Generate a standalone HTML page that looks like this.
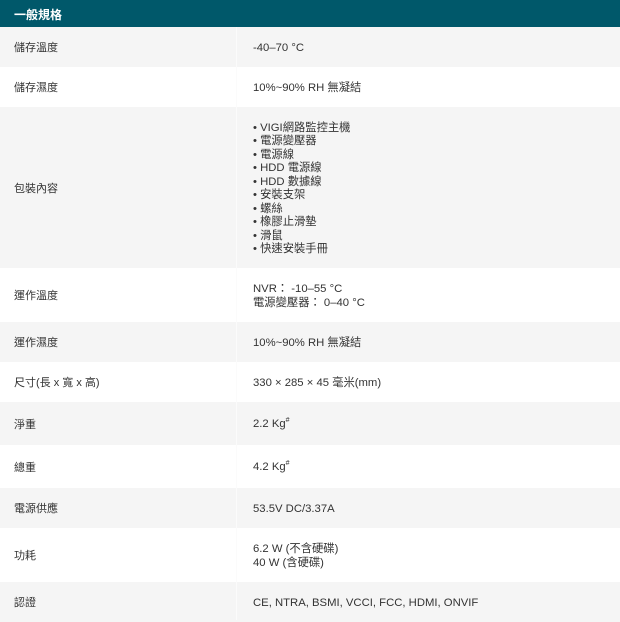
<!DOCTYPE html>
<html><head><meta charset="utf-8"><style>
*{margin:0;padding:0;box-sizing:border-box}
body{width:620px;height:620px;overflow:hidden;background:#fff;font-family:"Liberation Sans","Noto Sans CJK TC",sans-serif;font-size:11px;color:#333}
.h{position:absolute;left:0;top:0;width:620px;height:27px;background:#00586a;color:#fff;font-weight:bold;font-size:12px;padding:6px 0 0 14px}
.r{position:absolute;left:0;width:620px;display:flex;align-items:center}
.g{background:#f5f5f5}
.l{position:absolute;left:14px}
.v{position:absolute;left:253px;line-height:13.5px;padding-top:3px;font-size:11.3px}
.line{position:absolute;left:236px;top:27px;width:1px;height:593px;background:#fbfbfb}
sup{font-size:7px;vertical-align:5px;line-height:0}
</style></head><body>
<div class="h">一般規格</div>
<div class="r g" style="top:27px;height:40px"><span class="l">儲存溫度</span><span class="v">-40–70 °C</span></div>
<div class="r" style="top:67px;height:40px"><span class="l">儲存濕度</span><span class="v">10%~90% RH 無凝結</span></div>
<div class="r g" style="top:107px;height:161px"><span class="l">包裝內容</span><span class="v">• VIGI網路監控主機<br>• 電源變壓器<br>• 電源線<br>• HDD 電源線<br>• HDD 數據線<br>• 安裝支架<br>• 螺絲<br>• 橡膠止滑墊<br>• 滑鼠<br>• 快速安裝手冊</span></div>
<div class="r" style="top:268px;height:54px"><span class="l">運作溫度</span><span class="v">NVR： -10–55 °C<br>電源變壓器： 0–40 °C</span></div>
<div class="r g" style="top:322px;height:40px"><span class="l">運作濕度</span><span class="v">10%~90% RH 無凝結</span></div>
<div class="r" style="top:362px;height:40px"><span class="l">尺寸(長 x 寬 x 高)</span><span class="v">330 × 285 × 45 毫米(mm)</span></div>
<div class="r g" style="top:402px;height:43px"><span class="l">淨重</span><span class="v">2.2 Kg<sup>#</sup></span></div>
<div class="r" style="top:445px;height:43px"><span class="l">總重</span><span class="v">4.2 Kg<sup>#</sup></span></div>
<div class="r g" style="top:488px;height:40px"><span class="l">電源供應</span><span class="v">53.5V DC/3.37A</span></div>
<div class="r" style="top:528px;height:54px"><span class="l">功耗</span><span class="v">6.2 W (不含硬碟)<br>40 W (含硬碟)</span></div>
<div class="r g" style="top:582px;height:40px"><span class="l">認證</span><span class="v">CE, NTRA, BSMI, VCCI, FCC, HDMI, ONVIF</span></div>
<div class="line"></div>
</body></html>
